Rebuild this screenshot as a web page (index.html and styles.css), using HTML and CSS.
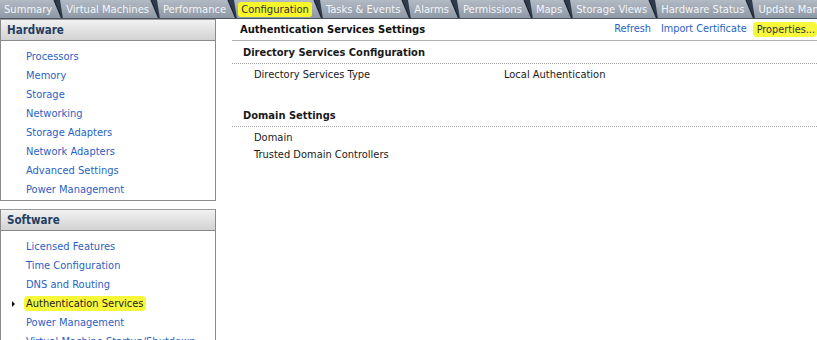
FILE: index.html
```html
<!DOCTYPE html>
<html>
<head>
<meta charset="utf-8">
<link rel="stylesheet" href="styles.css">
</head>
<body>
<div class="tabs">
  <span class="tab">Summary</span><span class="sep"><svg width="11" height="19" viewBox="0 0 11 19"><polygon points="1,0 7,0 10,19 9,19" fill="#2f3b4c"/><line x1="1" y1="0" x2="9" y2="19" stroke="#1c2430" stroke-width="1.2"/></svg></span>
  <span class="tab">Virtual Machines</span><span class="sep"><svg width="11" height="19" viewBox="0 0 11 19"><polygon points="1,0 7,0 10,19 9,19" fill="#2f3b4c"/><line x1="1" y1="0" x2="9" y2="19" stroke="#1c2430" stroke-width="1.2"/></svg></span>
  <span class="tab">Performance</span><span class="sep"><svg width="11" height="19" viewBox="0 0 11 19"><polygon points="1,0 7,0 10,19 9,19" fill="#2f3b4c"/><line x1="1" y1="0" x2="9" y2="19" stroke="#1c2430" stroke-width="1.2"/></svg></span>
  <span class="tab active"><span class="mark">Configuration</span></span><span class="sep"><svg width="11" height="19" viewBox="0 0 11 19"><polygon points="1,0 7,0 10,19 9,19" fill="#2f3b4c"/><line x1="1" y1="0" x2="9" y2="19" stroke="#1c2430" stroke-width="1.2"/></svg></span>
  <span class="tab">Tasks &amp; Events</span><span class="sep"><svg width="11" height="19" viewBox="0 0 11 19"><polygon points="1,0 7,0 10,19 9,19" fill="#2f3b4c"/><line x1="1" y1="0" x2="9" y2="19" stroke="#1c2430" stroke-width="1.2"/></svg></span>
  <span class="tab">Alarms</span><span class="sep"><svg width="11" height="19" viewBox="0 0 11 19"><polygon points="1,0 7,0 10,19 9,19" fill="#2f3b4c"/><line x1="1" y1="0" x2="9" y2="19" stroke="#1c2430" stroke-width="1.2"/></svg></span>
  <span class="tab">Permissions</span><span class="sep"><svg width="11" height="19" viewBox="0 0 11 19"><polygon points="1,0 7,0 10,19 9,19" fill="#2f3b4c"/><line x1="1" y1="0" x2="9" y2="19" stroke="#1c2430" stroke-width="1.2"/></svg></span>
  <span class="tab">Maps</span><span class="sep"><svg width="11" height="19" viewBox="0 0 11 19"><polygon points="1,0 7,0 10,19 9,19" fill="#2f3b4c"/><line x1="1" y1="0" x2="9" y2="19" stroke="#1c2430" stroke-width="1.2"/></svg></span>
  <span class="tab">Storage Views</span><span class="sep"><svg width="11" height="19" viewBox="0 0 11 19"><polygon points="1,0 7,0 10,19 9,19" fill="#2f3b4c"/><line x1="1" y1="0" x2="9" y2="19" stroke="#1c2430" stroke-width="1.2"/></svg></span>
  <span class="tab">Hardware Status</span><span class="sep"><svg width="11" height="19" viewBox="0 0 11 19"><polygon points="1,0 7,0 10,19 9,19" fill="#2f3b4c"/><line x1="1" y1="0" x2="9" y2="19" stroke="#1c2430" stroke-width="1.2"/></svg></span>
  <span class="tab">Update Manager</span>
</div>
<div class="main">
  <div class="left">
    <div class="box">
      <div class="box-head">Hardware</div>
      <ul class="items">
        <li>Processors</li>
        <li>Memory</li>
        <li>Storage</li>
        <li>Networking</li>
        <li>Storage Adapters</li>
        <li>Network Adapters</li>
        <li>Advanced Settings</li>
        <li>Power Management</li>
      </ul>
    </div>
    <div class="box">
      <div class="box-head">Software</div>
      <ul class="items">
        <li>Licensed Features</li>
        <li>Time Configuration</li>
        <li>DNS and Routing</li>
        <li class="current"><span class="arrow"></span><span class="mark">Authentication Services</span></li>
        <li>Power Management</li>
        <li>Virtual Machine Startup/Shutdown</li>
      </ul>
    </div>
  </div>
  <div class="right">
    <div class="head">
      <span class="title">Authentication Services Settings</span>
      <span class="links">
        <span class="link">Refresh</span>
        <span class="link">Import Certificate</span>
        <span class="link mark">Properties...</span>
      </span>
    </div>
    <div class="section">
      <div class="sec-title">Directory Services Configuration</div>
      <div class="row"><span class="key">Directory Services Type</span><span class="val">Local Authentication</span></div>
    </div>
    <div class="section second">
      <div class="sec-title">Domain Settings</div>
      <div class="row"><span class="key">Domain</span></div>
      <div class="row"><span class="key">Trusted Domain Controllers</span></div>
    </div>
  </div>
</div>
</body>
</html>
```
FILE: styles.css
```css
html, body {
  margin: 0;
  padding: 0;
  background: #ffffff;
}
body {
  width: 817px;
  height: 340px;
  overflow: hidden;
  font-family: "DejaVu Sans Condensed", "DejaVu Sans", sans-serif;
  font-stretch: condensed;
  font-size: 11px;
  color: #1a1a1a;
}
.tabs {
  display: flex;
  align-items: stretch;
  height: 19px;
  background: linear-gradient(#b2bac4, #8e99a6);
  border-bottom: 1px solid #4a5563;
  white-space: nowrap;
  overflow: hidden;
  box-sizing: border-box;
}
.tab {
  display: flex;
  align-items: center;
  padding: 0 1px 0 2px;
  color: #f4f6f8;
  font-size: 11.1px;
}
.tab:first-child {
  padding-left: 4px;
}
.tab.active {
  padding-left: 0;
}
.tab.active .mark {
  background: #f6f62a;
  color: #333333;
  padding: 1px 3px;
  margin-left: 0;
  border-radius: 3px;
}
.sep {
  display: flex;
  width: 11px;
}
.main {
  display: flex;
}
.left {
  width: 216px;
  display: flex;
  flex-direction: column;
  gap: 8px;
}
.box {
  border: 1px solid #8a8a8a;
  border-top-color: #9a9a9a;
}
.box-head {
  height: 20px;
  line-height: 20px;
  padding-left: 6px;
  background: linear-gradient(#f2f2f2, #d2d2d2);
  border-bottom: 1px solid #8a8a8a;
  font-weight: bold;
  color: #1f3f63;
  font-size: 11.5px;
}
.items {
  list-style: none;
  margin: 0;
  padding: 6px 0 1px 25px;
}
.items li {
  line-height: 19px;
  height: 19px;
  color: #2a5fc4;
  position: relative;
  white-space: nowrap;
}
.mark {
  background: #f8f83a;
  border-radius: 4px;
  color: #222222;
  padding: 1px 2px;
  margin-left: -2px;
}
.arrow {
  position: absolute;
  left: -14px;
  top: 7px;
  width: 0;
  height: 0;
  border-top: 3px solid transparent;
  border-bottom: 3px solid transparent;
  border-left: 3px solid #111111;
}
.right {
  flex: 1;
  padding-left: 16px;
}
.head {
  display: flex;
  justify-content: space-between;
  align-items: center;
  height: 21px;
  border-bottom: 1px solid #b4b4b4;
  padding-left: 8px;
}
.title {
  font-weight: bold;
  color: #111111;
  font-size: 11.1px;
}
.links {
  display: flex;
  gap: 10px;
}
.link {
  color: #2a5fc4;
  font-size: 10.8px;
}
.link.mark {
  color: #333333;
  padding: 1px 2px 1px 4px;
  margin-left: -4px;
}
.sec-title {
  height: 22px;
  line-height: 24px;
  padding-left: 11px;
  font-weight: bold;
  border-bottom: 1px dotted #a0a0a0;
}
.section.second {
  margin-top: 21px;
}
.section .sec-title + .row {
  margin-top: 2px;
}
.row {
  display: flex;
  line-height: 17px;
  height: 17px;
  padding-left: 22px;
}
.key {
  width: 250px;
}
```
